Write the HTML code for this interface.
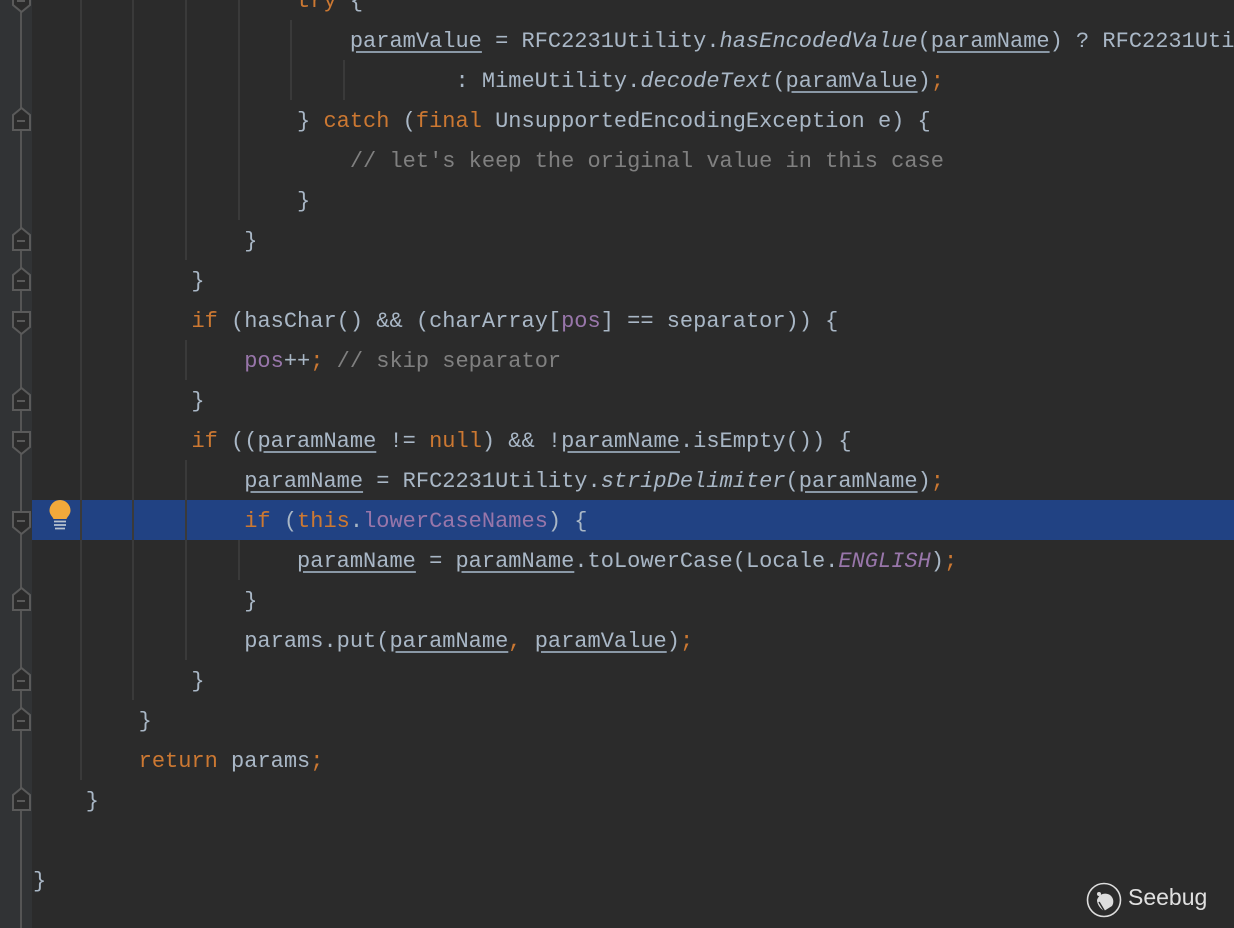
<!DOCTYPE html>
<html><head><meta charset="utf-8"><style>
body{margin:0;width:1234px;height:928px;background:#2b2b2b;overflow:hidden;position:relative;font-family:"Liberation Mono",monospace;}
.gut{position:absolute;left:0;top:0;width:32px;height:928px;background:#313335;}
.fl{position:absolute;left:20px;top:0;width:2px;height:928px;background:#555;}
.hl{position:absolute;left:32px;top:500px;width:1202px;height:40px;background:#214283;}
.g{position:absolute;width:2px;background:#3a3a3a;}
.ln{position:absolute;left:33px;width:1201px;overflow:hidden;height:40px;line-height:44px;font-size:22px;color:#a9b7c6;white-space:pre;}
.k{color:#cc7832}.c{color:#808080}.f{color:#9876aa}.i{font-style:italic}.u{text-decoration:underline;text-underline-offset:4px;text-decoration-color:#8a98a6}
</style></head><body>
<div class="gut"></div>
<div class="hl"></div>
<div class="fl"></div>
<div class="g" style="left:80px;top:0;height:780px"></div>
<div class="g" style="left:132px;top:0;height:700px"></div>
<div class="g" style="left:185px;top:0;height:260px"></div>
<div class="g" style="left:238px;top:0;height:220px"></div>
<div class="g" style="left:290px;top:20px;height:80px"></div>
<div class="g" style="left:343px;top:60px;height:40px"></div>
<div class="g" style="left:185px;top:340px;height:40px"></div>
<div class="g" style="left:185px;top:460px;height:200px"></div>
<div class="g" style="left:238px;top:540px;height:40px"></div>

<svg width="32" height="928" style="position:absolute;left:0;top:0">
<g fill="#2b2b2b" stroke="#5a5a5a" stroke-width="2">
<path d="M13,-10 h17 v15 l-8.5,7 l-8.5,-7z"/>
<path d="M13,130 h17 v-15 l-8.5,-7 l-8.5,7z"/>
<path d="M13,250 h17 v-15 l-8.5,-7 l-8.5,7z"/>
<path d="M13,290 h17 v-15 l-8.5,-7 l-8.5,7z"/>
<path d="M13,312 h17 v15 l-8.5,7 l-8.5,-7z"/>
<path d="M13,410 h17 v-15 l-8.5,-7 l-8.5,7z"/>
<path d="M13,432 h17 v15 l-8.5,7 l-8.5,-7z"/>
<path d="M13,512 h17 v15 l-8.5,7 l-8.5,-7z"/>
<path d="M13,610 h17 v-15 l-8.5,-7 l-8.5,7z"/>
<path d="M13,690 h17 v-15 l-8.5,-7 l-8.5,7z"/>
<path d="M13,730 h17 v-15 l-8.5,-7 l-8.5,7z"/>
<path d="M13,810 h17 v-15 l-8.5,-7 l-8.5,7z"/>
</g>
<g stroke="#5a5a5a" stroke-width="2">
<path d="M17,1h8M17,121h8M17,241h8M17,281h8M17,321h8M17,401h8M17,441h8M17,521h8M17,601h8M17,681h8M17,721h8M17,801h8"/>
</g>
</svg>
<svg width="30" height="34" style="position:absolute;left:46px;top:499px">
<path d="M14,1 a10.5,10.5 0 0 1 10.5,10.5 c0,4 -3,6 -4,8.5 h-13 c-1,-2.5 -4,-4.5 -4,-8.5 a10.5,10.5 0 0 1 10.5,-10.5z" fill="#f2a93b"/>
<path d="M8,22.5h12M8,26h12M9,29.5h10" stroke="#b8c3d0" stroke-width="1.8"/>
</svg>

<div class="ln" style="top:-20px">                    <span class="k">try</span> {</div>
<div class="ln" style="top:20px">                        <span class="u">paramValue</span> = RFC2231Utility.<span class="i">hasEncodedValue</span>(<span class="u">paramName</span>) ? RFC2231Utility.<span class="i">decodeText</span>(<span class="u">paramValue</span>)</div>
<div class="ln" style="top:60px">                                : MimeUtility.<span class="i">decodeText</span>(<span class="u">paramValue</span>)<span class="k">;</span></div>
<div class="ln" style="top:100px">                    } <span class="k">catch</span> (<span class="k">final</span> UnsupportedEncodingException e) {</div>
<div class="ln" style="top:140px">                        <span class="c">// let's keep the original value in this case</span></div>
<div class="ln" style="top:180px">                    }</div>
<div class="ln" style="top:220px">                }</div>
<div class="ln" style="top:260px">            }</div>
<div class="ln" style="top:300px">            <span class="k">if</span> (hasChar() &amp;&amp; (charArray[<span class="f">pos</span>] == separator)) {</div>
<div class="ln" style="top:340px">                <span class="f">pos</span>++<span class="k">;</span> <span class="c">// skip separator</span></div>
<div class="ln" style="top:380px">            }</div>
<div class="ln" style="top:420px">            <span class="k">if</span> ((<span class="u">paramName</span> != <span class="k">null</span>) &amp;&amp; !<span class="u">paramName</span>.isEmpty()) {</div>
<div class="ln" style="top:460px">                <span class="u">paramName</span> = RFC2231Utility.<span class="i">stripDelimiter</span>(<span class="u">paramName</span>)<span class="k">;</span></div>
<div class="ln" style="top:500px">                <span class="k">if</span> (<span class="k">this</span>.<span class="f">lowerCaseNames</span>) {</div>
<div class="ln" style="top:540px">                    <span class="u">paramName</span> = <span class="u">paramName</span>.toLowerCase(Locale.<span class="f i">ENGLISH</span>)<span class="k">;</span></div>
<div class="ln" style="top:580px">                }</div>
<div class="ln" style="top:620px">                params.put(<span class="u">paramName</span><span class="k">,</span> <span class="u">paramValue</span>)<span class="k">;</span></div>
<div class="ln" style="top:660px">            }</div>
<div class="ln" style="top:700px">        }</div>
<div class="ln" style="top:740px">        <span class="k">return</span> params<span class="k">;</span></div>
<div class="ln" style="top:780px">    }</div>
<div class="ln" style="top:860px">}</div>

<svg width="40" height="40" style="position:absolute;left:1085px;top:880px">
<circle cx="19" cy="20" r="16.5" fill="none" stroke="#ddd" stroke-width="1.6"/>
<path d="M12,20 c2,-6 8,-8 13,-5 c4,3 4,8 2,11 l-8,5 c-3,-2 -7,-6 -7,-11z" fill="#ddd"/>
<path d="M14,22 l6,10" stroke="#2b2b2b" stroke-width="1.5"/>
<circle cx="14" cy="14" r="2" fill="#ddd"/>
</svg>
<div style="position:absolute;left:1128px;top:884px;font-family:'Liberation Sans',sans-serif;font-size:23px;color:#e0e0e0;">Seebug</div>
</body></html>
